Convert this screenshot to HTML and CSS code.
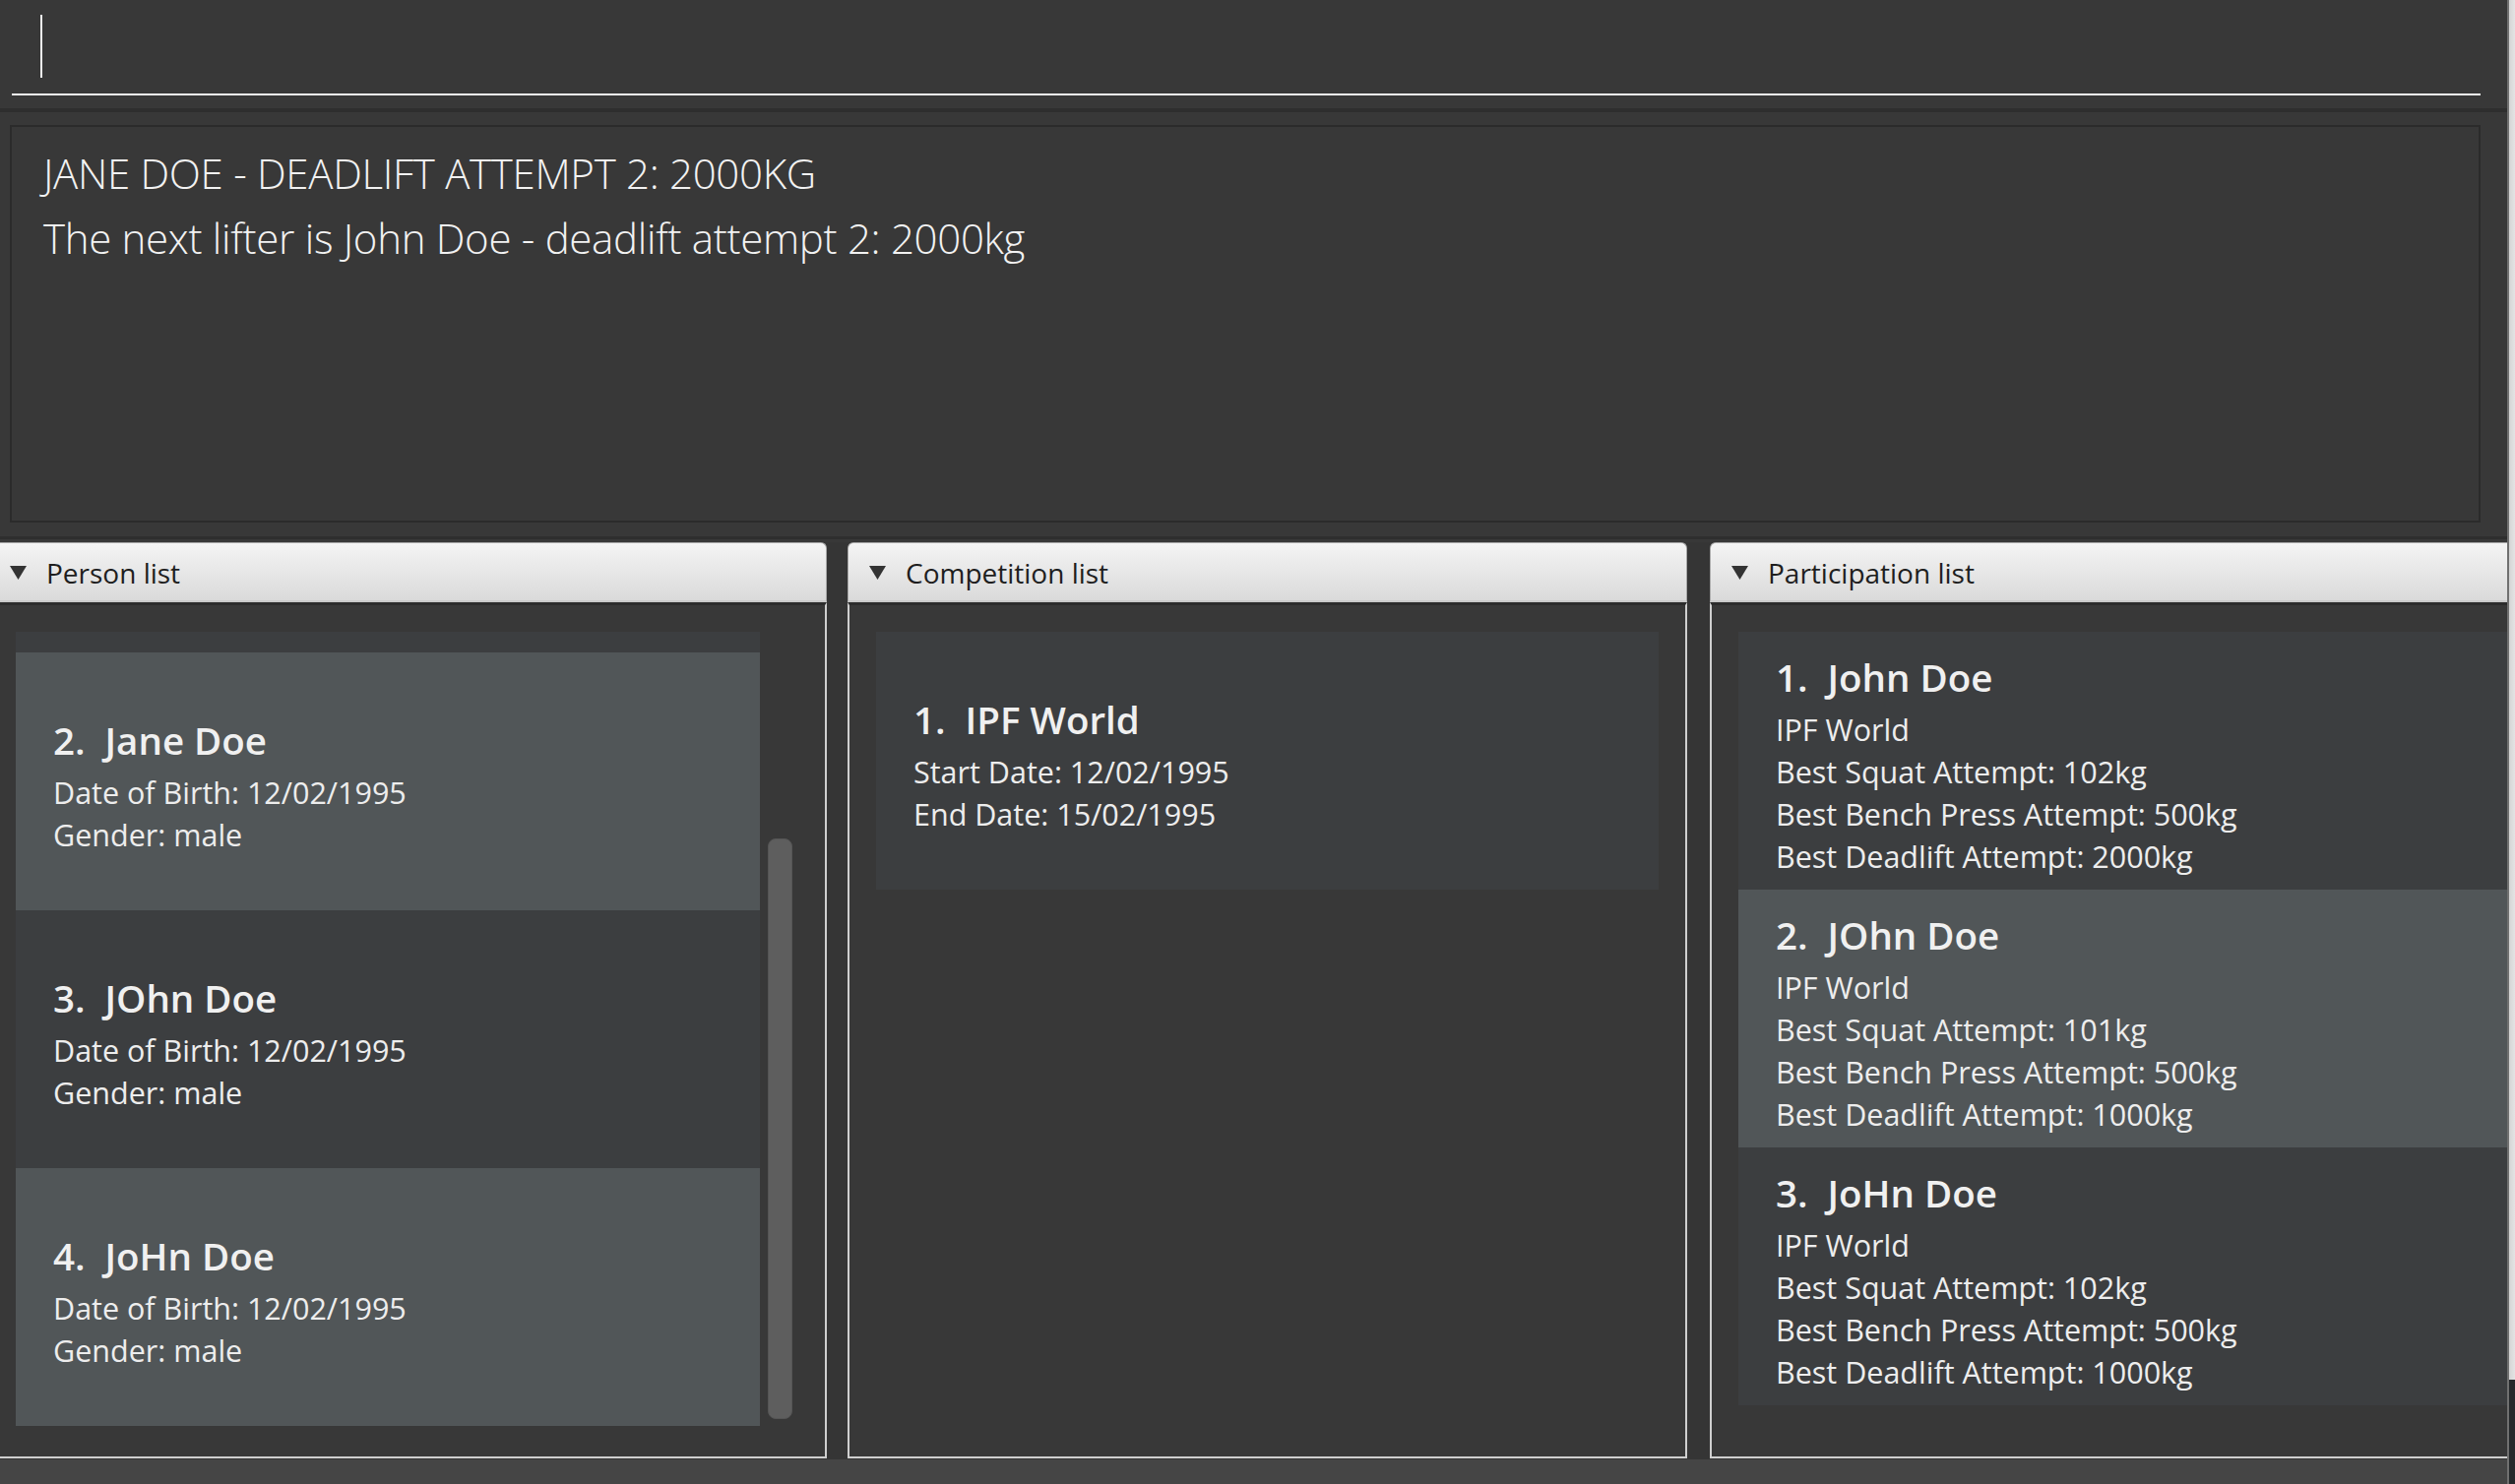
FILE: index.html
```html
<!DOCTYPE html>
<html>
<head>
<meta charset="utf-8">
<link rel="stylesheet" href="styles.css">
</head>
<body>
<div class="window">
  <div class="command">
    <div class="command-field"><div class="caret"></div></div>
  </div>
  <div class="divider"></div>
  <div class="result">
    <div class="result-box">
      <div>JANE DOE - DEADLIFT ATTEMPT 2: 2000KG</div>
      <div>The next lifter is John Doe - deadlift attempt 2: 2000kg</div>
    </div>
  </div>
  <div class="divider-thin"></div>
  <div class="panels">
    <section class="panel panel-first">
      <div class="panel-header">
        <svg class="toggle" viewBox="0 0 17 14"><polygon points="0,0 17,0 8.5,14" fill="#333"/></svg>
        <span>Person list</span>
      </div>
      <div class="panel-body panel-body-scroll">
        <div class="viewport">
          <div class="list">
            <div class="card-peek card-dark"></div>
            <div class="card card-light">
              <div class="card-name">2.&nbsp; Jane Doe</div>
              <div class="card-line">Date of Birth: 12/02/1995</div>
              <div class="card-line">Gender: male</div>
            </div>
            <div class="card card-dark">
              <div class="card-name">3.&nbsp; JOhn Doe</div>
              <div class="card-line">Date of Birth: 12/02/1995</div>
              <div class="card-line">Gender: male</div>
            </div>
            <div class="card card-light">
              <div class="card-name">4.&nbsp; JoHn Doe</div>
              <div class="card-line">Date of Birth: 12/02/1995</div>
              <div class="card-line">Gender: male</div>
            </div>
          </div>
        </div>
        <div class="scrollbar"><div class="thumb"></div></div>
      </div>
    </section>
    <section class="panel panel-mid">
      <div class="panel-header">
        <svg class="toggle" viewBox="0 0 17 14"><polygon points="0,0 17,0 8.5,14" fill="#333"/></svg>
        <span>Competition list</span>
      </div>
      <div class="panel-body">
        <div class="list">
          <div class="card card-dark">
            <div class="card-name">1.&nbsp; IPF World</div>
            <div class="card-line">Start Date: 12/02/1995</div>
            <div class="card-line">End Date: 15/02/1995</div>
          </div>
        </div>
      </div>
    </section>
    <section class="panel panel-last">
      <div class="panel-header">
        <svg class="toggle" viewBox="0 0 17 14"><polygon points="0,0 17,0 8.5,14" fill="#333"/></svg>
        <span>Participation list</span>
      </div>
      <div class="panel-body">
        <div class="list">
          <div class="card card-dark">
            <div class="card-name">1.&nbsp; John Doe</div>
            <div class="card-line">IPF World</div>
            <div class="card-line">Best Squat Attempt: 102kg</div>
            <div class="card-line">Best Bench Press Attempt: 500kg</div>
            <div class="card-line">Best Deadlift Attempt: 2000kg</div>
          </div>
          <div class="card card-light">
            <div class="card-name">2.&nbsp; JOhn Doe</div>
            <div class="card-line">IPF World</div>
            <div class="card-line">Best Squat Attempt: 101kg</div>
            <div class="card-line">Best Bench Press Attempt: 500kg</div>
            <div class="card-line">Best Deadlift Attempt: 1000kg</div>
          </div>
          <div class="card card-dark">
            <div class="card-name">3.&nbsp; JoHn Doe</div>
            <div class="card-line">IPF World</div>
            <div class="card-line">Best Squat Attempt: 102kg</div>
            <div class="card-line">Best Bench Press Attempt: 500kg</div>
            <div class="card-line">Best Deadlift Attempt: 1000kg</div>
          </div>
        </div>
      </div>
    </section>
  </div>
  <div class="status"></div>
</div>
<div class="edge">
  <div class="edge-top"></div>
  <div class="edge-bottom"></div>
</div>
</body>
</html>
```
FILE: styles.css
```css
* { box-sizing: border-box; }
html, body { margin: 0; padding: 0; }
body {
  width: 2555px;
  height: 1508px;
  overflow: hidden;
  display: flex;
  background: #383838;
  font-family: "Open Sans", "Noto Sans", sans-serif;
}
.window {
  width: 2547px;
  height: 1508px;
  flex: none;
  display: flex;
  flex-direction: column;
  overflow: hidden;
  background: #383838;
}
.edge {
  width: 8px;
  flex: none;
  display: flex;
  flex-direction: column;
  border-left: 2px solid #707070;
}
.edge-top { height: 1402px; background: linear-gradient(to right, #d4d4d4, #e4e4e4); }
.edge-bottom { flex: 1; background: #25282b; }

.command { height: 110px; flex: none; padding: 15px 27px 0 12px; }
.command-field { height: 82px; border-bottom: 2px solid #f2f2f2; padding-left: 29px; }
.caret { width: 2px; height: 64px; background: #f0f0f0; }
.divider { height: 4px; flex: none; background: #2e2e2e; }

.result { height: 431px; flex: none; padding: 13px 27px 14px 10px; }
.result-box {
  height: 100%;
  border: 2px solid #2b2b2b;
  padding: 14px 32px;
  color: #f2f2f2;
  font-weight: 300;
  font-size: 42px;
  line-height: 66px;
  letter-spacing: -0.3px;
}
.divider-thin { height: 3px; flex: none; background: #2e2e2e; margin-bottom: 3px; }

.panels {
  height: 932px;
  flex: none;
  display: flex;
  padding-bottom: 1px;
  background: #353535;
}
.panel { width: 853px; flex: none; display: flex; flex-direction: column; }
.panel-first { width: 852px; margin-left: -12px; }
.panel-mid { margin-left: 21px; }
.panel-last { margin-left: 23px; }

.panel-header {
  height: 61px;
  flex: none;
  display: flex;
  align-items: center;
  padding-left: 21px;
  padding-top: 2px;
  border: 1px solid #a8a8a8;
  border-bottom: 2px solid #cacaca;
  border-radius: 6px 6px 0 0;
  background: linear-gradient(#f4f4f4, #dadada);
  color: #1e1e1e;
  font-size: 28px;
}
.toggle { width: 17px; height: 14px; margin-right: 20px; flex: none; }

.panel-body {
  flex: 1;
  min-height: 0;
  background: #383838;
  border: 2px solid #cfcfcf;
  border-top: 3px solid #2c2c2c;
  padding: 27px 27px 0 27px;
  overflow: hidden;
}
.panel-body-scroll { display: flex; align-items: flex-start; padding: 27px 33px 0 26px; }
.viewport { width: 756px; flex: none; overflow: hidden; }
.scrollbar { width: 25px; flex: none; margin-left: 8px; padding-top: 210px; }
.thumb {
  height: 590px;
  background: #5e5e5e;
  border: 1px solid #555;
  border-radius: 8px;
}

.card-peek { height: 21px; }
.card {
  height: 262px;
  display: flex;
  flex-direction: column;
  justify-content: center;
  padding-left: 38px;
  padding-top: 7px;
  color: #ededed;
  white-space: nowrap;
}
.card-dark { background: #3c3e40; }
.card-light { background: #515658; }
.card-name { font-size: 38.5px; font-weight: 600; line-height: 52px; margin-bottom: 6px; color: #f0f0f0; }
.card-line { font-size: 30.5px; line-height: 43px; }

.status { flex: 1; background: #454545; }
```
